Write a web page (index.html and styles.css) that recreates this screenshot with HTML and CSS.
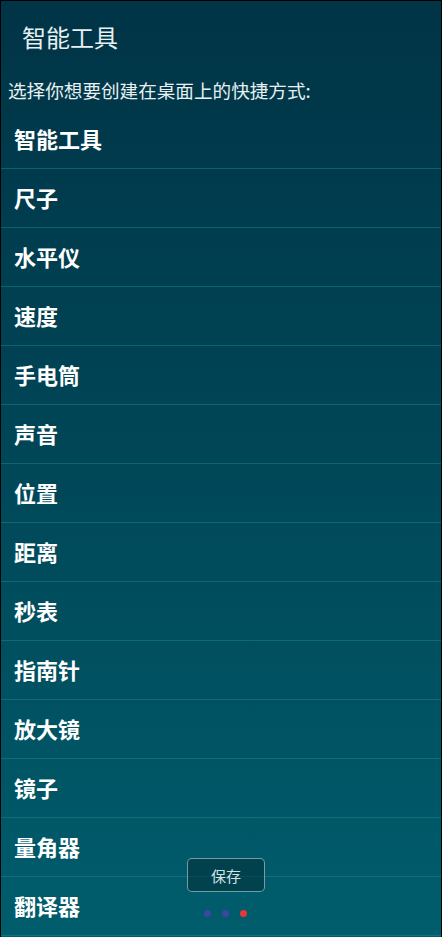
FILE: index.html
```html
<!DOCTYPE html>
<html lang="zh-CN">
<head>
<meta charset="utf-8">
<title>智能工具</title>
<link rel="stylesheet" href="styles.css">
</head>
<body>
<div class="screen">
  <header class="header">
    <h1 class="title">智能工具</h1>
  </header>
  <p class="subtitle">选择你想要创建在桌面上的快捷方式:</p>
  <ul class="list">
    <li class="item">智能工具</li>
    <li class="item">尺子</li>
    <li class="item">水平仪</li>
    <li class="item">速度</li>
    <li class="item">手电筒</li>
    <li class="item">声音</li>
    <li class="item">位置</li>
    <li class="item">距离</li>
    <li class="item">秒表</li>
    <li class="item">指南针</li>
    <li class="item">放大镜</li>
    <li class="item">镜子</li>
    <li class="item">量角器</li>
    <li class="item">翻译器</li>
  </ul>
  <button class="save">保存</button>
  <div class="dots">
    <span class="dot"></span>
    <span class="dot"></span>
    <span class="dot active"></span>
  </div>
</div>
</body>
</html>
```
FILE: styles.css
```css
html, body {
  margin: 0;
  padding: 0;
  background: #000;
}
body {
  width: 442px;
  height: 937px;
  overflow: hidden;
  font-family: "Noto Sans CJK SC", "Noto Sans", sans-serif;
}
.screen {
  position: relative;
  box-sizing: border-box;
  width: 442px;
  height: 937px;
  border: 1px solid #000;
  border-bottom: 0;
  background: linear-gradient(to bottom, #003446 0%, #004556 45%, #005d6c 100%);
  overflow: hidden;
}
.header {
  padding: 20px 0 0 21px;
}
.title {
  margin: 0;
  font-size: 24px;
  line-height: 32px;
  font-weight: 400;
  color: #e8f0f2;
}
.subtitle {
  margin: 25px 0 0 7px;
  font-size: 18.6px;
  line-height: 24px;
  color: #e8f0f2;
}
.list {
  list-style: none;
  margin: 8px 0 0 0;
  padding: 0;
}
.item {
  height: 56px;
  line-height: 56px;
  padding-bottom: 2px;
  padding-left: 13px;
  font-size: 22px;
  font-weight: 700;
  color: #ffffff;
  border-bottom: 1px solid rgba(30, 140, 150, 0.45);
}
.save {
  position: absolute;
  left: 186px;
  top: 857px;
  width: 78px;
  height: 34px;
  box-sizing: border-box;
  border: 1.5px solid rgba(170, 195, 200, 0.7);
  border-radius: 5px;
  background: rgba(0, 45, 55, 0.55);
  color: #d6e0e3;
  font-family: "Noto Sans CJK SC", sans-serif;
  font-size: 15px;
  padding: 0;
}
.dots {
  position: absolute;
  left: 0;
  right: 0;
  top: 909px;
  display: flex;
  justify-content: center;
  gap: 11px;
  padding-left: 9px;
}
.dot {
  width: 7px;
  height: 7px;
  border-radius: 50%;
  background: #3c46a0;
}
.dot.active {
  background: #e53935;
}
```
